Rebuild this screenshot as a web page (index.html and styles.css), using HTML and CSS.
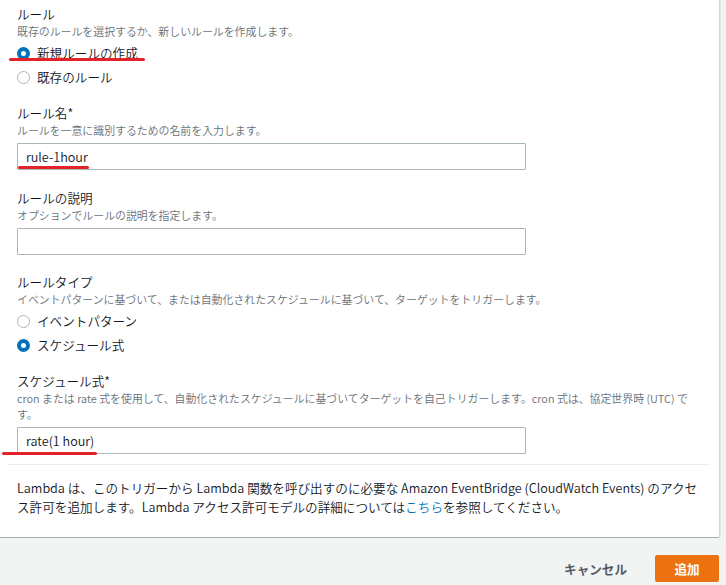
FILE: index.html
```html
<!DOCTYPE html>
<html lang="ja">
<head>
<meta charset="utf-8">
<title>トリガーの追加</title>
<link rel="stylesheet" href="styles.css">
</head>
<body>
<div class="card">
  <div class="form">
    <div class="field first">
      <div class="label">ルール</div>
      <div class="desc">既存のルールを選択するか、新しいルールを作成します。</div>
      <div class="radios">
        <div class="radio-row">
          <span class="radio checked"></span><span class="radio-text">新規ルールの作成</span>
          <span class="mark mark-new"></span>
        </div>
        <div class="radio-row">
          <span class="radio"></span><span class="radio-text">既存のルール</span>
        </div>
      </div>
    </div>

    <div class="field gap-s">
      <div class="label">ルール名*</div>
      <div class="desc">ルールを一意に識別するための名前を入力します。</div>
      <div class="control">
        <input class="input" type="text" value="rule-1hour">
        <span class="mark mark-name"></span>
      </div>
    </div>

    <div class="field gap-l">
      <div class="label">ルールの説明</div>
      <div class="desc">オプションでルールの説明を指定します。</div>
      <div class="control">
        <input class="input" type="text" value="">
      </div>
    </div>

    <div class="field gap-m">
      <div class="label">ルールタイプ</div>
      <div class="desc">イベントパターンに基づいて、または自動化されたスケジュールに基づいて、ターゲットをトリガーします。</div>
      <div class="radios">
        <div class="radio-row">
          <span class="radio"></span><span class="radio-text">イベントパターン</span>
        </div>
        <div class="radio-row">
          <span class="radio checked"></span><span class="radio-text">スケジュール式</span>
        </div>
      </div>
    </div>

    <div class="field gap-s">
      <div class="label">スケジュール式*</div>
      <div class="desc">cron または rate 式を使用して、自動化されたスケジュールに基づいてターゲットを自己トリガーします。cron 式は、協定世界時 (UTC) です。</div>
      <div class="control">
        <input class="input" type="text" value="rate(1 hour)">
        <span class="mark mark-rate"></span>
      </div>
    </div>
  </div>

  <p class="notice">Lambda は、このトリガーから Lambda 関数を呼び出すのに必要な Amazon EventBridge (CloudWatch Events) のアクセス許可を追加します。Lambda アクセス許可モデルの詳細については<a class="link" href="#">こちら</a>を参照してください。</p>
</div>

<div class="footer">
  <button class="btn btn-cancel" type="button">キャンセル</button>
  <button class="btn btn-primary" type="button">追加</button>
</div>
</body>
</html>
```

FILE: styles.css
```css
html, body {
  margin: 0;
  padding: 0;
}

body {
  background: #f2f3f3;
  font-family: "Noto Sans CJK JP", "Noto Sans", sans-serif;
  font-weight: 350;
  color: #16191f;
  font-size: 12.6px;
}

.card {
  width: 719px;
  box-sizing: border-box;
  background: #ffffff;
  padding: 5px 9px 21px 8px;
  box-shadow: 0 1px 0 #a9b1b3, 1px 0 0 #cfd4d5, 2px 0 0 #e4e7e7;
}

.form {
  padding: 0 9px;
}

.field.gap-s { margin-top: 15px; }
.field.gap-m { margin-top: 18px; }
.field.gap-l { margin-top: 19px; }

.label {
  font-size: 12.6px;
  line-height: 18px;
  color: #16191f;
}

.desc {
  font-size: 10.9px;
  line-height: 16px;
  color: #687078;
}

.radios {
  margin-top: 2px;
}

.radio-row {
  position: relative;
  display: flex;
  align-items: center;
  height: 24px;
}

.radio {
  width: 13px;
  height: 13px;
  box-sizing: border-box;
  border-radius: 50%;
  border: 1px solid #aab7b8;
  background: #ffffff;
  flex: none;
}

.radio.checked {
  border: 4px solid #0073bb;
}

.radio-text {
  margin-left: 7px;
  font-size: 12.6px;
  line-height: 18px;
  color: #16191f;
}

.control {
  position: relative;
  margin-top: 5px;
  width: 509px;
}

.input {
  display: block;
  width: 509px;
  height: 27px;
  box-sizing: border-box;
  margin: 0;
  padding: 0 8px;
  border: 1px solid #aab7b8;
  border-radius: 1px;
  background: #ffffff;
  font-family: "Noto Sans CJK JP", "Noto Sans", sans-serif;
  font-weight: 350;
  font-size: 12.6px;
  color: #16191f;
  outline: none;
}

.notice {
  margin: 10px 0 0;
  border-top: 1px solid #eaeded;
  padding: 13px 9px 0;
  font-size: 12.6px;
  line-height: 19px;
  color: #16191f;
}

.link {
  color: #0073bb;
  text-decoration: none;
}

.footer {
  display: flex;
  justify-content: flex-end;
  align-items: center;
  padding: 18px 7px 0 0;
}

.btn {
  height: 27px;
  margin: 0;
  border: none;
  font-family: "Noto Sans CJK JP", "Noto Sans", sans-serif;
  font-size: 12.6px;
  font-weight: bold;
  cursor: pointer;
}

.btn-cancel {
  background: transparent;
  color: #545b64;
  padding: 0 20px;
  margin-right: 8px;
}

.btn-primary {
  width: 64px;
  padding: 0;
  background: #ec7211;
  color: #ffffff;
  border-radius: 2px;
}

/* red hand-drawn annotation underlines */
.mark {
  position: absolute;
  height: 3px;
  background: #e4222a;
  border-radius: 2px;
}

.mark-new {
  left: -8px;
  top: 17px;
  width: 136px;
}

.mark-name {
  left: 1px;
  top: 23px;
  width: 71px;
}

.mark-rate {
  left: -15px;
  top: 25px;
  width: 95px;
}
```
